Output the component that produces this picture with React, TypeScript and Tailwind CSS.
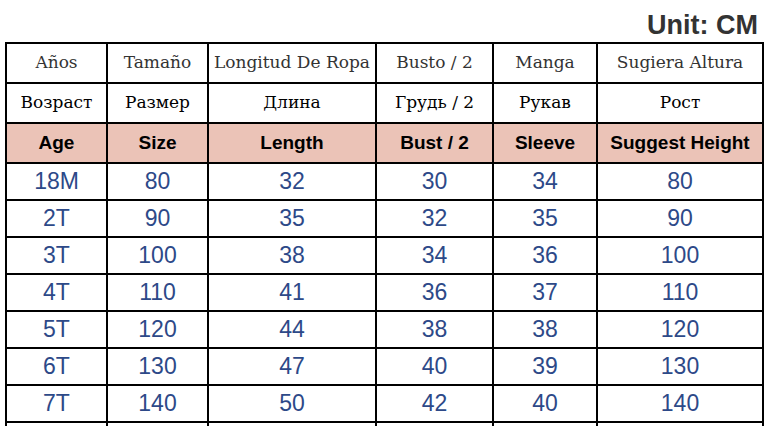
export default function App() {
  const es = ["Años", "Tamaño", "Longitud De Ropa", "Busto / 2", "Manga", "Sugiera Altura"];
  const ru = ["Возраст", "Размер", "Длина", "Грудь / 2", "Рукав", "Рост"];
  const en = ["Age", "Size", "Length", "Bust / 2", "Sleeve", "Suggest Height"];
  const rows = [
    ["18M", "80", "32", "30", "34", "80"],
    ["2T", "90", "35", "32", "35", "90"],
    ["3T", "100", "38", "34", "36", "100"],
    ["4T", "110", "41", "36", "37", "110"],
    ["5T", "120", "44", "38", "38", "120"],
    ["6T", "130", "47", "40", "39", "130"],
    ["7T", "140", "50", "42", "40", "140"],
  ];

  return (
    <div className="w-[768px] h-[426px] overflow-hidden bg-white">
      <div className="h-[42px] flex items-end justify-end pr-[10px] pb-[3px]">
        <span className="text-[27px] leading-none font-bold text-[#333] font-['Liberation_Sans',Arial,sans-serif]">
          Unit: CM
        </span>
      </div>
      <div className="ml-[5px] w-[759px] bg-black p-[2px] grid grid-cols-[99px_99px_166px_115px_102px_164px] gap-[2px]">
        {es.map((t) => (
          <div key={t} className="h-[38px] bg-white flex items-center justify-center text-[17px] text-[#333] font-['DejaVu_Serif',serif]">
            {t}
          </div>
        ))}
        {ru.map((t) => (
          <div key={t} className="h-[38px] bg-white flex items-center justify-center text-[17px] text-black font-['DejaVu_Serif',serif]">
            {t}
          </div>
        ))}
        {en.map((t) => (
          <div key={t} className="h-[38px] bg-[#ebc3b7] flex items-center justify-center text-[19px] font-bold text-black font-['Liberation_Sans',Arial,sans-serif]">
            {t}
          </div>
        ))}
        {rows.map((r, i) =>
          r.map((v, j) => (
            <div key={i + "-" + j} className="h-[35px] bg-white flex items-center justify-center text-[23px] text-[#2d4988] font-['Liberation_Sans',Arial,sans-serif]">
              {v}
            </div>
          ))
        )}
        {en.map((t) => (
          <div key={"e" + t} className="h-[35px] bg-white" />
        ))}
      </div>
    </div>
  );
}
